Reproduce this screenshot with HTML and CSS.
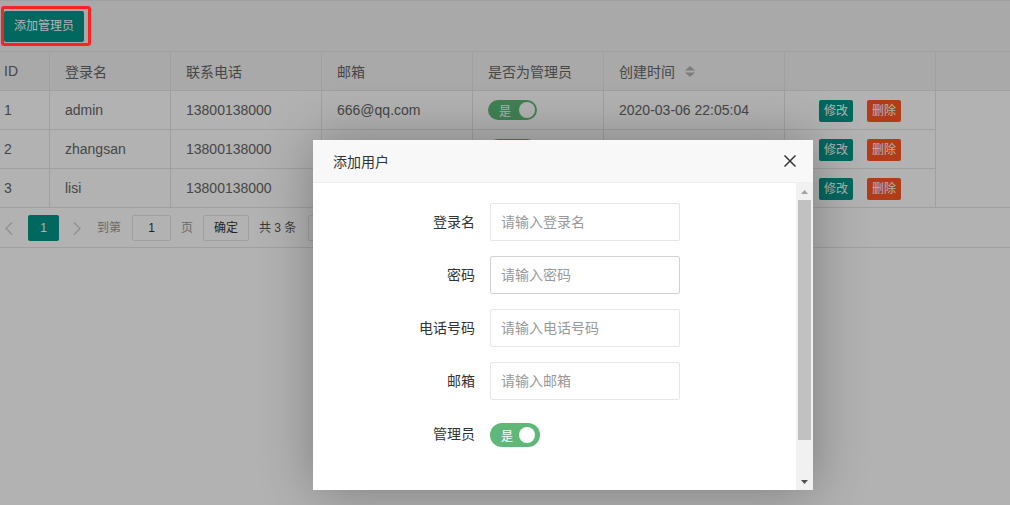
FILE: index.html
```html
<!DOCTYPE html>
<html lang="zh-CN">
<head>
<meta charset="utf-8">
<title>管理员列表</title>
<link rel="stylesheet" href="styles.css">
</head>
<body>
<div class="page">
  <div class="toolbar"><button class="btn-add">添加管理员</button></div>
  <div class="thead">
    <div class="cell c1">ID</div>
    <div class="cell">登录名</div>
    <div class="cell">联系电话</div>
    <div class="cell">邮箱</div>
    <div class="cell">是否为管理员</div>
    <div class="cell">创建时间<svg class="sort" width="10" height="11" viewBox="0 0 10 11"><polygon points="0,4.5 5,0 10,4.5" /><polygon points="0,6.5 5,11 10,6.5" /></svg></div>
    <div class="cell"></div>
    <div class="cell last"></div>
  </div>
  <div class="tbody">
    <div class="row">
      <div class="cell c1">1</div>
      <div class="cell">admin</div>
      <div class="cell">13800138000</div>
      <div class="cell">666@qq.com</div>
      <div class="cell"><span class="tswitch"><span class="sw-text">是</span><i class="knob"></i></span></div>
      <div class="cell">2020-03-06 22:05:04</div>
      <div class="cell ops"><span class="xbtn edit">修改</span><span class="xbtn del">删除</span></div>
    </div>
    <div class="row">
      <div class="cell c1">2</div>
      <div class="cell">zhangsan</div>
      <div class="cell">13800138000</div>
      <div class="cell"></div>
      <div class="cell"><span class="tswitch"><span class="sw-text">是</span><i class="knob"></i></span></div>
      <div class="cell"></div>
      <div class="cell ops"><span class="xbtn edit">修改</span><span class="xbtn del">删除</span></div>
    </div>
    <div class="row">
      <div class="cell c1">3</div>
      <div class="cell">lisi</div>
      <div class="cell">13800138000</div>
      <div class="cell"></div>
      <div class="cell"></div>
      <div class="cell"></div>
      <div class="cell ops"><span class="xbtn edit">修改</span><span class="xbtn del">删除</span></div>
    </div>
  </div>
  <div class="pager">
    <span class="pg-prev"><svg width="8" height="13" viewBox="0 0 8 13"><polyline points="7,0.5 1,6.5 7,12.5" /></svg></span>
    <span class="pg-curr">1</span>
    <span class="pg-next"><svg width="8" height="13" viewBox="0 0 8 13"><polyline points="1,0.5 7,6.5 1,12.5" /></svg></span>
    <span class="pg-skip">到第</span>
    <span class="pg-input">1</span>
    <span class="pg-skip pg-page">页</span>
    <span class="pg-ok">确定</span>
    <span class="pg-count">共 3 条</span>
    <span class="pg-limit">10 条/页</span>
  </div>
</div>

<div class="annot"></div>
<div class="shade"></div>

<div class="layer">
  <div class="layer-title">
    <span>添加用户</span>
    <svg class="close" width="12" height="12" viewBox="0 0 12 12"><line x1="0.5" y1="0.5" x2="11.5" y2="11.5" /><line x1="11.5" y1="0.5" x2="0.5" y2="11.5" /></svg>
  </div>
  <div class="layer-body">
    <form class="form">
      <div class="item"><label class="label">登录名</label><input class="input" placeholder="请输入登录名"></div>
      <div class="item"><label class="label">密码</label><input class="input hover" placeholder="请输入密码"></div>
      <div class="item"><label class="label">电话号码</label><input class="input" placeholder="请输入电话号码"></div>
      <div class="item"><label class="label">邮箱</label><input class="input" placeholder="请输入邮箱"></div>
      <div class="item"><label class="label">管理员</label><span class="fswitch"><span class="sw-text">是</span><i class="knob"></i></span></div>
    </form>
    <div class="scrollbar">
      <div class="sb-btn"><svg width="7" height="4" viewBox="0 0 7 4"><polygon class="up" points="0,4 3.5,0 7,4" /></svg></div>
      <div class="sb-thumb"></div>
      <div class="sb-space"></div>
      <div class="sb-btn"><svg width="7" height="4" viewBox="0 0 7 4"><polygon class="down" points="0,0 3.5,4 7,0" /></svg></div>
    </div>
  </div>
</div>
</body>
</html>
```
FILE: styles.css
```css
* { box-sizing: border-box; }
html, body { margin: 0; padding: 0; }
body {
  width: 1010px;
  height: 505px;
  overflow: hidden;
  position: relative;
  background: #fff;
  font-family: "Liberation Sans", "Noto Sans CJK SC", sans-serif;
  font-size: 14px;
  color: #666;
}

.toolbar {
  height: 52px;
  border-top: 1px solid #e6e6e6;
  border-bottom: 1px solid #e6e6e6;
  background: #f2f2f2;
  padding: 10px 0 0 4px;
}
.btn-add {
  display: block;
  height: 31px;
  width: 80px;
  padding: 0;
  border: none;
  border-radius: 2px;
  background: #009688;
  color: #fff;
  font-family: inherit;
  font-size: 12px;
  line-height: 31px;
}

.thead {
  display: grid;
  grid-template-columns: 50px 121px 151px 151px 131px 181px 151px 1fr;
  height: 39px;
  background: #f2f2f2;
  border-bottom: 1px solid #e6e6e6;
}
.row {
  display: grid;
  grid-template-columns: 50px 121px 151px 151px 131px 181px 151px;
  width: 936px;
  height: 39px;
}
.row .cell { border-bottom: 1px solid #e6e6e6; }
.row:last-child { height: 38px; }
.row:last-child .cell { border-bottom: none; }
.tbody { border-bottom: 1px solid #e6e6e6; }

.cell {
  display: flex;
  align-items: center;
  padding: 0 15px;
  border-right: 1px solid #e6e6e6;
  white-space: nowrap;
}
.cell.c1 { padding-left: 4px; }
.cell.last { border-right: none; }
.sort { margin-left: 10px; fill: #b2b2b2; }

.tswitch {
  display: flex;
  align-items: center;
  justify-content: space-between;
  width: 49px;
  height: 20px;
  padding: 0 2px 0 11px;
  border-radius: 20px;
  background: #5fb878;
  color: #fff;
  font-size: 12px;
}
.knob {
  display: block;
  width: 16px;
  height: 16px;
  border-radius: 50%;
  background: #fff;
}

.ops { justify-content: center; gap: 14px; padding: 1px 0 0; }
.xbtn {
  display: block;
  width: 34px;
  height: 22px;
  line-height: 22px;
  text-align: center;
  border-radius: 2px;
  color: #fff;
  font-size: 12px;
}
.edit { background: #009688; }
.del { background: #ff5722; }

.pager {
  display: flex;
  align-items: flex-start;
  height: 40px;
  padding-top: 7px;
  border-bottom: 1px solid #e6e6e6;
  font-size: 12px;
  line-height: 26px;
}
.pager svg { fill: none; stroke: #d2d2d2; stroke-width: 1.5; }
.pg-prev { display: flex; align-items: center; width: 28px; height: 26px; padding-left: 5px; }
.pg-curr {
  width: 31px;
  height: 26px;
  text-align: center;
  background: #009688;
  color: #fff;
  border-radius: 2px;
}
.pg-next { display: flex; align-items: center; width: 38px; height: 26px; padding-left: 14px; }
.pg-skip { color: #999; }
.pg-input {
  width: 39px;
  height: 26px;
  margin-left: 11px;
  line-height: 24px;
  text-align: center;
  border: 1px solid #e6e6e6;
  border-radius: 2px;
  color: #333;
}
.pg-page { margin-left: 10px; }
.pg-ok {
  width: 46px;
  height: 26px;
  margin-left: 10px;
  line-height: 24px;
  text-align: center;
  border: 1px solid #e6e6e6;
  border-radius: 2px;
  color: #333;
}
.pg-count { margin-left: 10px; color: #555; }
.pg-limit {
  width: 90px;
  height: 26px;
  margin-left: 12px;
  line-height: 24px;
  padding-left: 10px;
  border: 1px solid #e6e6e6;
  border-radius: 2px;
}

.annot {
  position: absolute;
  left: 1px;
  top: 6px;
  width: 90px;
  height: 40px;
  border: 3px solid #fb2222;
  border-radius: 3px;
  z-index: 30;
}
.shade {
  position: absolute;
  inset: 0;
  background: rgba(0, 0, 0, 0.3);
  z-index: 10;
}

.layer {
  position: absolute;
  left: 313px;
  top: 140px;
  width: 500px;
  height: 350px;
  display: flex;
  flex-direction: column;
  background: #fff;
  box-shadow: 1px 1px 50px rgba(0, 0, 0, 0.3);
  z-index: 20;
}
.layer-title {
  display: flex;
  align-items: center;
  justify-content: space-between;
  height: 43px;
  padding: 0 17px 0 20px;
  background: #f8f8f8;
  border-bottom: 1px solid #eee;
  color: #333;
  font-size: 14px;
}
.close { stroke: #333; stroke-width: 1.5; }
.layer-body { flex: 1; display: flex; min-height: 0; }
.form { flex: 1; margin: 0; padding: 20px 0 0 67px; }
.item { display: flex; align-items: flex-start; margin-bottom: 15px; }
.label {
  width: 110px;
  padding: 9px 15px;
  line-height: 20px;
  text-align: right;
  color: #333;
  font-size: 14px;
}
.input {
  width: 190px;
  height: 38px;
  padding: 0 0 0 10px;
  border: 1px solid #e6e6e6;
  border-radius: 2px;
  font-family: inherit;
  font-size: 14px;
  color: #333;
  outline: none;
  background: #fff;
}
.input.hover { border-color: #d2d2d2; }
.input::placeholder { color: #999; }

.fswitch {
  display: flex;
  align-items: center;
  justify-content: space-between;
  width: 50px;
  height: 24px;
  margin-top: 8px;
  padding: 0 5px 0 11px;
  border-radius: 20px;
  background: #5fb878;
  color: #fff;
  font-size: 12px;
}

.scrollbar {
  display: flex;
  flex-direction: column;
  width: 17px;
  background: #f1f1f1;
}
.sb-btn {
  display: flex;
  align-items: center;
  justify-content: center;
  height: 17px;
}
.sb-btn .up { fill: #a3a3a3; }
.sb-btn .down { fill: #505050; }
.sb-thumb {
  height: 240px;
  margin: 0 2px;
  background: #c1c1c1;
}
.sb-space { flex: 1; }
```
